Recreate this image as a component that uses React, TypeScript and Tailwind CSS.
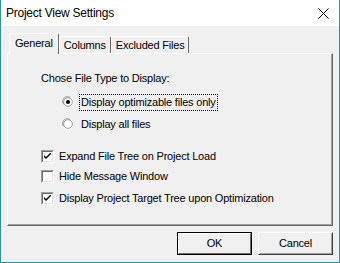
import React from 'react'

const font = { fontFamily: '"Liberation Sans", Arial, sans-serif' }

function Radio({ checked }: { checked?: boolean }) {
  return (
    <svg width="12" height="12" viewBox="0 0 12 12" className="shrink-0">
      <path d="M1.5 8.5 A5 5 0 0 1 8.5 1.5" stroke="#a0a0a0" fill="none" />
      <path d="M8.5 1.5 A5 5 0 0 1 3.5 10.5 A5 5 0 0 1 1.5 8.5" stroke="#ffffff" fill="none" />
      <circle cx="6" cy="6" r="4.2" fill="#ffffff" stroke="#696969" strokeWidth="0.8" />
      <circle cx="6" cy="6" r="3.6" fill="#ffffff" />
      {checked && <circle cx="6" cy="6" r="2" fill="#000" />}
    </svg>
  )
}

function Check({ checked }: { checked?: boolean }) {
  return (
    <div className="w-[13px] h-[13px] shrink-0 border border-t-[#a0a0a0] border-l-[#a0a0a0] border-b-white border-r-white">
      <div className="w-full h-full bg-white border border-t-[#696969] border-l-[#696969] border-b-[#e3e3e3] border-r-[#e3e3e3] flex items-center justify-center">
        {checked && (
          <svg width="7" height="7" viewBox="0 0 7 7">
            <path d="M0 2 L0 4 L2 6 L7 1 L7 -1 L2 4 Z" fill="#000" />
          </svg>
        )}
      </div>
    </div>
  )
}

function Tab({ label, active }: { label: string; active?: boolean }) {
  return (
    <div
      className={`flex items-center justify-center rounded-t-[2px] border-t border-l border-r border-t-white border-l-white border-r-[#696969] ${
        active ? 'h-[21px] -mb-[1px] px-[5px] bg-[#f0f0f0] z-10' : 'h-[17px] px-[4px]'
      }`}
    >
      <span className={active ? 'pb-[2px]' : ''}>{label}</span>
    </div>
  )
}

export default function App() {
  return (
    <div
      style={font}
      className="w-[340px] h-[263px] flex flex-col bg-[#f0f0f0] border-x border-b border-[#1f9a9a] text-[11px] tracking-[-0.2px] text-black leading-[13px]"
    >
      <div className="h-[26px] bg-white flex items-center justify-between pl-[5px] pr-[10px]">
        <span className="text-[12px] tracking-[-0.25px]">Project View Settings</span>
        <svg width="11" height="11" viewBox="0 0 11 11">
          <path d="M0.5 0.5 L10.5 10.5 M10.5 0.5 L0.5 10.5" stroke="#000" strokeWidth="1" />
        </svg>
      </div>

      <div className="flex flex-col px-[6px] pt-[7px]">
        <div className="flex items-end pl-[2px] relative">
          <Tab label="General" active />
          <Tab label="Columns" />
          <Tab label="Excluded Files" />
        </div>

        <div className="h-[173px] border border-t-white border-l-white border-b-[#696969] border-r-[#696969]">
          <div className="h-full border-b border-r border-b-[#a0a0a0] border-r-[#a0a0a0] flex flex-col pl-[33px] pt-[16px]">
            <div className="h-[16px] flex items-center">Chose File Type to Display:</div>

            <div className="h-[16px] mt-[8px] flex items-center pl-[21px] gap-[5px]">
              <Radio checked />
              <span className="border border-dotted border-black px-[1px] py-[1px]">
                Display optimizable files only
              </span>
            </div>
            <div className="h-[16px] mt-[6px] flex items-center pl-[21px] gap-[7px]">
              <Radio />
              <span>Display all files</span>
            </div>

            <div className="h-[16px] mt-[16px] flex items-center gap-[5px]">
              <Check checked />
              <span>Expand File Tree on Project Load</span>
            </div>
            <div className="h-[16px] mt-[4px] flex items-center gap-[5px]">
              <Check />
              <span>Hide Message Window</span>
            </div>
            <div className="h-[16px] mt-[6px] flex items-center gap-[5px]">
              <Check checked />
              <span>Display Project Target Tree upon Optimization</span>
            </div>
          </div>
        </div>

        <div className="flex justify-end gap-[6px] mt-[6px]">
          <button className="w-[75px] h-[23px] border border-black bg-[#f0f0f0]">
            <div className="w-full h-full border border-t-white border-l-white border-b-[#696969] border-r-[#696969] flex items-center justify-center">
              OK
            </div>
          </button>
          <button className="w-[75px] h-[23px] border border-t-white border-l-white border-b-[#404040] border-r-[#404040] bg-[#f0f0f0]">
            <div className="w-full h-full border border-t-[#f0f0f0] border-l-[#f0f0f0] border-b-[#a0a0a0] border-r-[#a0a0a0] flex items-center justify-center">
              Cancel
            </div>
          </button>
        </div>
      </div>
    </div>
  )
}
